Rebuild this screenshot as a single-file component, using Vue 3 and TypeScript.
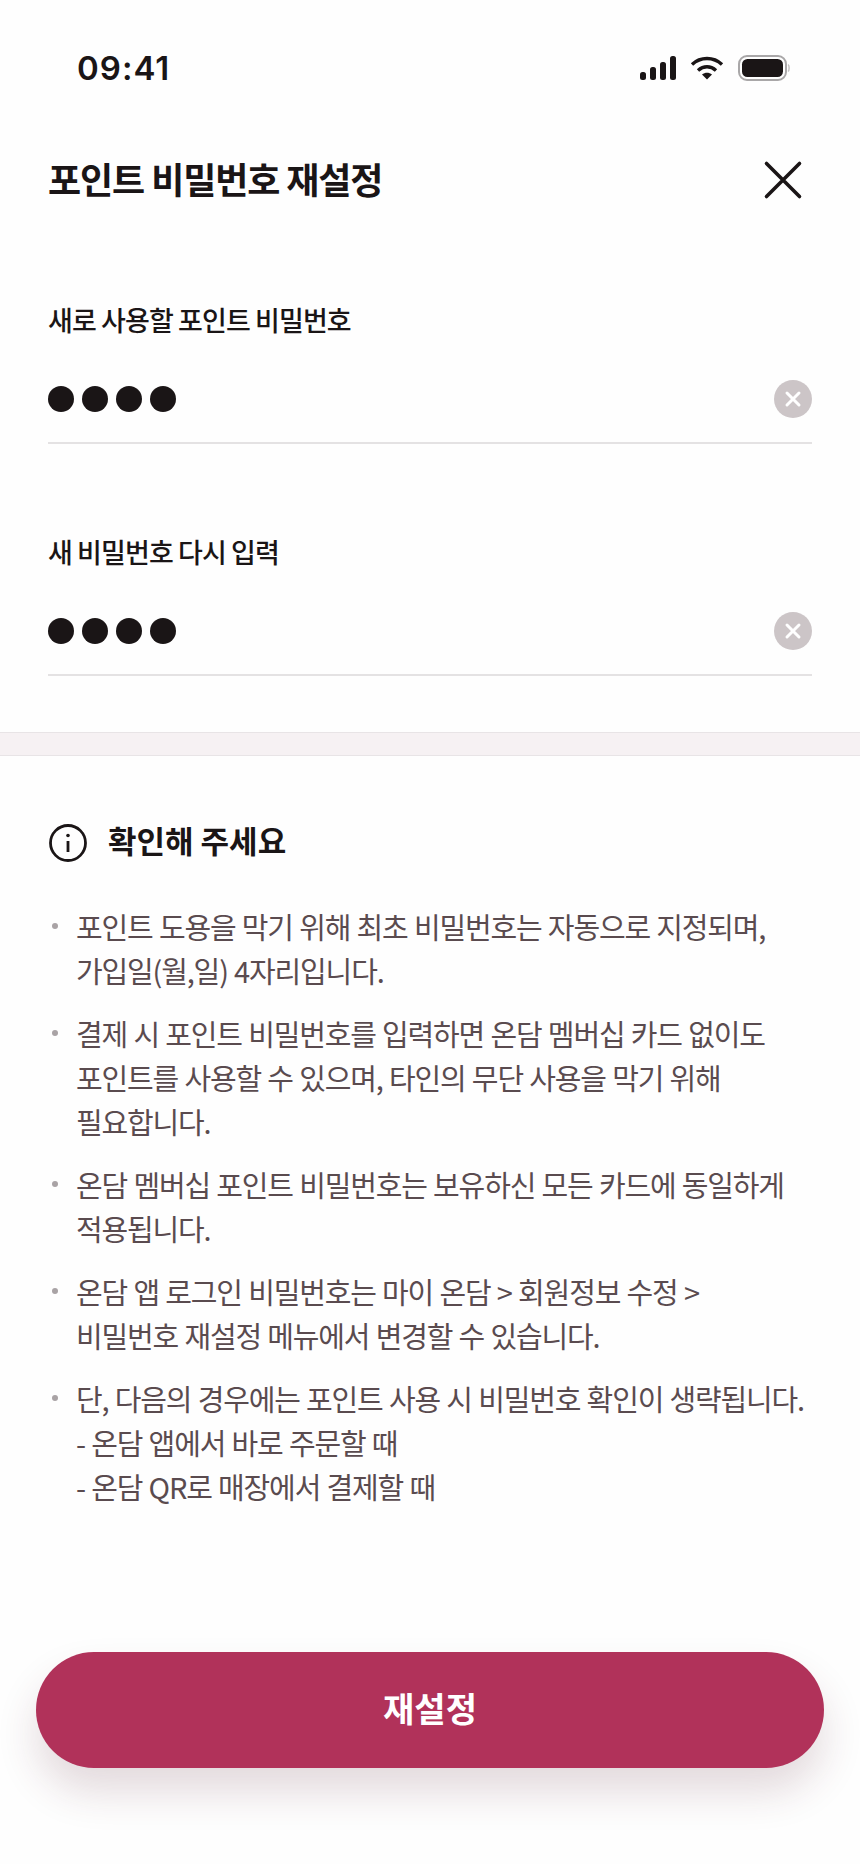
<script setup lang="ts">
import { ref } from 'vue'

const fields = ref([
  { label: '새로 사용할 포인트 비밀번호' },
  { label: '새 비밀번호 다시 입력' },
])

const notes = [
  ['포인트 도용을 막기 위해 최초 비밀번호는 자동으로 지정되며,', '가입일(월,일) 4자리입니다.'],
  ['결제 시 포인트 비밀번호를 입력하면 온담 멤버십 카드 없이도', '포인트를 사용할 수 있으며, 타인의 무단 사용을 막기 위해', '필요합니다.'],
  ['온담 멤버십 포인트 비밀번호는 보유하신 모든 카드에 동일하게', '적용됩니다.'],
  ['온담 앱 로그인 비밀번호는 마이 온담 > 회원정보 수정 >', '비밀번호 재설정 메뉴에서 변경할 수 있습니다.'],
  ['단, 다음의 경우에는 포인트 사용 시 비밀번호 확인이 생략됩니다.', '- 온담 앱에서 바로 주문할 때', '- 온담 QR로 매장에서 결제할 때'],
]
</script>

<template>
  <div class="page">
    <div class="status-bar">
      <span class="time">09:41</span>
      <div class="status-icons">
        <svg width="36" height="24" viewBox="0 0 36 24" fill="#1a1516">
          <rect x="0" y="16" width="6" height="8" rx="2.5" />
          <rect x="10" y="11" width="6" height="13" rx="2.5" />
          <rect x="20" y="6" width="6" height="18" rx="2.5" />
          <rect x="30" y="0" width="6" height="24" rx="2.5" />
        </svg>
        <svg width="34" height="24" viewBox="0 0 34 24" fill="none" stroke="#1a1516" stroke-width="3.4">
          <path d="M2 8.5C10.5 0.5 23.500 0.500 32 8.500" />
          <path d="M8 14.500C13.500 9.500 20.500 9.500 26 14.500" />
          <path d="M12 18.500L17 23.500L22 18.500C19 16 15 16 12 18.500Z" fill="#1a1516" stroke="none" />
        </svg>
        <svg width="52" height="26" viewBox="0 0 52 26" fill="none">
          <rect x="1" y="1" width="47" height="24" rx="8" stroke="#a9a7a8" stroke-width="2" />
          <rect x="4" y="4" width="41" height="18" rx="5.500" fill="#1a1516" />
          <path d="M50 9.500C51.500 10.500 51.500 15.500 50 16.500" stroke="#c4c2c3" stroke-width="1.500" />
        </svg>
      </div>
    </div>

    <header class="header">
      <h1 class="title">포인트 비밀번호 재설정</h1>
      <svg class="close" width="40" height="40" viewBox="0 0 40 40" fill="none" stroke="#1a1516" stroke-width="3.600" stroke-linecap="round">
        <path d="M3.500 3.500L36.500 36.500M36.500 3.500L3.500 36.500" />
      </svg>
    </header>

    <section class="fields">
      <div v-for="field in fields" :key="field.label" class="field">
        <label class="field-label">{{ field.label }}</label>
        <div class="field-input">
          <div class="dots">
            <span v-for="n in 4" :key="n" class="dot"></span>
          </div>
          <svg width="38" height="38" viewBox="0 0 38 38">
            <circle cx="19" cy="19" r="19" fill="#ccc5c7" />
            <path d="M13 13L25 25M25 13L13 25" stroke="#fff" stroke-width="3" stroke-linecap="round" />
          </svg>
        </div>
      </div>
    </section>

    <div class="band"></div>

    <section class="notice">
      <div class="notice-head">
        <svg class="info" width="38" height="38" viewBox="0 0 38 38" fill="none" stroke="#1a1516" stroke-width="2.800">
          <circle cx="19" cy="19" r="17.500" />
          <path d="M19 17V28" stroke-width="2.800" />
          <circle cx="19" cy="11.500" r="1.800" fill="#1a1516" stroke="none" />
        </svg>
        <h2 class="notice-title">확인해 주세요</h2>
      </div>
      <ul class="notes">
        <li v-for="(lines, i) in notes" :key="i" class="note">
          <span v-for="line in lines" :key="line" class="note-line">{{ line }}</span>
        </li>
      </ul>
    </section>

    <div class="footer">
      <button class="submit">재설정</button>
    </div>
  </div>
</template>

<style scoped>
.page {
  width: 860px;
  height: 1864px;
  background: #fefefe;
  display: flex;
  flex-direction: column;
  font-family: "Noto Sans CJK KR", "Noto Sans", sans-serif;
  color: #1a1516;
  overflow: hidden;
}

.status-bar {
  height: 134px;
  padding: 52px 70px 0 77px;
  box-sizing: border-box;
  display: flex;
  justify-content: space-between;
  align-items: flex-start;
}

.time {
  font-family: Inter, sans-serif;
  font-size: 33px;
  font-weight: 600;
  line-height: 32px;
  letter-spacing: 1px;
}

.status-icons {
  display: flex;
  align-items: center;
  gap: 14px;
  margin-top: 3px;
}

.header {
  height: 92px;
  padding: 0 57px 0 48px;
  display: flex;
  justify-content: space-between;
  align-items: center;
}

.title {
  margin: 0;
  font-size: 36px;
  line-height: 44px;
  font-weight: 700;
  letter-spacing: -1.1px;
  padding-bottom: 4px;
}

.fields {
  display: flex;
  flex-direction: column;
  gap: 88px;
  padding: 74px 48px 0;
}

.field-label {
  display: block;
  font-size: 27px;
  font-weight: 500;
  line-height: 40px;
  letter-spacing: -0.9px;
}

.field-input {
  margin-top: 40px;
  padding-bottom: 24px;
  display: flex;
  justify-content: space-between;
  align-items: center;
  border-bottom: 2px solid #e4e2e3;
}

.dots {
  display: flex;
  gap: 8px;
}

.dot {
  width: 26px;
  height: 26px;
  border-radius: 50%;
  background: #1a1516;
}

.band {
  height: 24px;
  margin-top: 56px;
  flex-shrink: 0;
  background: #f6f1f3;
  border-top: 1px solid #e8e4e6;
  border-bottom: 1px solid #e8e4e6;
  box-sizing: border-box;
}

.notice {
  padding: 65px 36px 0 48px;
}

.notice-head {
  display: flex;
  align-items: center;
  gap: 21px;
}

.info {
  margin-left: 1px;
}

.notice-title {
  margin: 0;
  font-size: 31px;
  font-weight: 700;
  line-height: 38px;
  padding-bottom: 6px;
}

.notes {
  list-style: none;
  margin: 39px 0 0;
  padding: 0;
  display: flex;
  flex-direction: column;
  gap: 19px;
}

.note {
  position: relative;
  padding-left: 28px;
  color: #5a4b4f;
  font-size: 29px;
  line-height: 44px;
  letter-spacing: -1.16px;
  word-spacing: 1px;
}

.note::before {
  content: "";
  position: absolute;
  left: 4px;
  top: 19px;
  width: 6px;
  height: 6px;
  border-radius: 50%;
  background: #a9a3a5;
}

.note-line {
  display: block;
  white-space: nowrap;
}

.footer {
  margin-top: auto;
  padding: 0 36px 96px;
}

.submit {
  display: block;
  width: 100%;
  height: 116px;
  padding: 0 0 6px;
  border: none;
  border-radius: 58px;
  background: #b1325a;
  color: #fff;
  font-family: inherit;
  font-size: 34px;
  font-weight: 700;
  box-shadow: 0 24px 40px rgba(90, 30, 50, 0.16);
}
</style>

<style>
html,
body {
  margin: 0;
  background: #fefefe;
}
</style>
